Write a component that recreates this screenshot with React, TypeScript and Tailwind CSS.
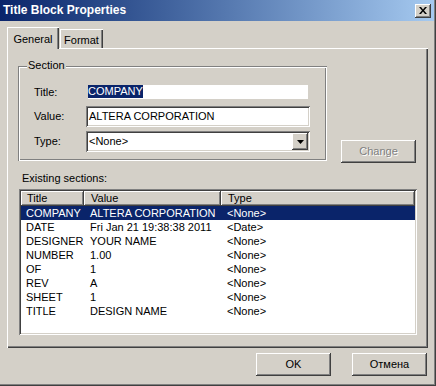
import React from "react";

const raised =
  "shadow-[inset_-1px_-1px_#404040,inset_1px_1px_#ffffff,inset_-2px_-2px_#808080,inset_2px_2px_#d4d0c8]";
const sunken =
  "shadow-[inset_1px_1px_#808080,inset_-1px_-1px_#ffffff,inset_2px_2px_#404040,inset_-2px_-2px_#d4d0c8]";
const headerCell =
  "shadow-[inset_-1px_-1px_#404040,inset_1px_1px_#ffffff,inset_-2px_-2px_#808080]";

const rows: [string, string, string][] = [
  ["COMPANY", "ALTERA CORPORATION", "<None>"],
  ["DATE", "Fri Jan 21 19:38:38 2011", "<Date>"],
  ["DESIGNER", "YOUR NAME", "<None>"],
  ["NUMBER", "1.00", "<None>"],
  ["OF", "1", "<None>"],
  ["REV", "A", "<None>"],
  ["SHEET", "1", "<None>"],
  ["TITLE", "DESIGN NAME", "<None>"],
];

export default function App() {
  return (
    <div className="w-[436px] h-[386px] bg-[#d4d0c8] flex flex-col overflow-hidden text-[11px] leading-[13px] text-black font-['Liberation_Sans',Arial,sans-serif] shadow-[inset_-1px_-1px_#404040,inset_-2px_-2px_#808080]">
      {/* Title bar */}
      <div className="h-[21px] mr-[2px] flex items-center pl-[3px] pr-[3px] bg-linear-to-r from-[#0a246a] to-[#a6caf0] shrink-0">
        <span className="text-white font-bold text-[12px] leading-[15px]">
          Title Block Properties
        </span>
        <div
          className={`ml-auto w-[16px] h-[14px] bg-[#d4d0c8] flex items-center justify-center ${raised}`}
        >
          <svg width="8" height="7" viewBox="0 0 8 7">
            <path d="M0 0h2l2 2.5L6 0h2L5 3.5 8 7H6L4 4.5 2 7H0l3-3.5z" fill="#000" />
          </svg>
        </div>
      </div>

      {/* Tabs */}
      <div className="mt-[6px] ml-[7px] h-[21px] flex items-end shrink-0">
        <div className="relative z-10 h-[22px] -mb-[1px] w-[52px] flex justify-center pt-[6px] bg-[#d4d0c8] shadow-[inset_1px_1px_#ffffff,inset_-1px_0_#404040,inset_-2px_0_#808080]">
          General
        </div>
        <div className="h-[19px] w-[43px] ml-[1px] flex justify-center pt-[5px] bg-[#d4d0c8] shadow-[inset_1px_1px_#ffffff,inset_-1px_0_#404040,inset_-2px_0_#808080]">
          Format
        </div>
      </div>

      {/* Panel */}
      <div className="ml-[7px] w-[421px] h-[300px] shrink-0 pl-[11px] pt-[18px] shadow-[inset_1px_1px_#ffffff,inset_-1px_-1px_#404040,inset_-2px_-2px_#808080]">
        <div className="flex items-start">
          {/* Group box */}
          <div className="relative w-[309px] shrink-0 pt-[19px] pl-[16px] pb-[9px] shadow-[inset_1px_1px_#808080,inset_2px_2px_#ffffff,inset_-1px_-1px_#ffffff,inset_-2px_-2px_#808080]">
            <span className="absolute left-[9px] top-[-7px] px-[1px] bg-[#d4d0c8]">Section</span>

            <div className="flex items-center h-[14px]">
              <div className="w-[52px]">Title:</div>
              <div className="ml-[2px] w-[220px] h-[14px] bg-white flex items-start">
                <span className="bg-[#0a246a] text-white leading-[13px]">COMPANY</span>
              </div>
            </div>

            <div className="mt-[7px] flex items-center h-[21px]">
              <div className="w-[52px]">Value:</div>
              <div className={`w-[224px] h-[21px] bg-white pl-[3px] flex items-center ${sunken}`}>
                ALTERA CORPORATION
              </div>
            </div>

            <div className="mt-[4px] flex items-center h-[21px]">
              <div className="w-[52px]">Type:</div>
              <div className={`w-[224px] h-[21px] bg-white pl-[3px] pr-[2px] flex items-center ${sunken}`}>
                <span>&lt;None&gt;</span>
                <div
                  className={`ml-auto w-[16px] h-[17px] bg-[#d4d0c8] flex items-center justify-center ${raised}`}
                >
                  <svg width="7" height="4" viewBox="0 0 7 4">
                    <path d="M0 0h7L3.5 4z" fill="#000" />
                  </svg>
                </div>
              </div>
            </div>
          </div>

          {/* Change button */}
          <div
            className={`ml-[14px] mt-[74px] w-[75px] h-[23px] flex items-center justify-center text-[#808080] [text-shadow:1px_1px_#ffffff] ${raised}`}
          >
            Change
          </div>
        </div>

        <div className="mt-[9px] ml-[4px]">Existing sections:</div>

        {/* List view */}
        <div className={`mt-[4px] ml-[1px] w-[398px] h-[146px] bg-white p-[2px] ${sunken}`}>
          <div className="flex h-[15px] bg-[#d4d0c8]">
            <div className={`w-[63px] pl-[6px] flex items-center ${headerCell}`}>Title</div>
            <div className={`w-[137px] pl-[7px] flex items-center ${headerCell}`}>Value</div>
            <div className={`flex-1 pl-[7px] flex items-center ${headerCell}`}>Type</div>
          </div>
          {rows.map((r, i) => (
            <div
              key={r[0]}
              className={`flex h-[14px] items-center ${i === 0 ? "bg-[#0a246a] text-white" : ""}`}
            >
              <div className="w-[63px] pl-[5px] whitespace-nowrap">{r[0]}</div>
              <div className="w-[137px] pl-[6px] whitespace-nowrap">{r[1]}</div>
              <div className="flex-1 pl-[6px] whitespace-nowrap">{r[2]}</div>
            </div>
          ))}
        </div>
      </div>

      {/* Buttons */}
      <div className="mt-[5px] flex justify-end gap-[21px] pr-[9px]">
        <div className={`w-[75px] h-[23px] flex items-center justify-center ${raised}`}>OK</div>
        <div className={`w-[75px] h-[23px] flex items-center justify-center ${raised}`}>Отмена</div>
      </div>
    </div>
  );
}
